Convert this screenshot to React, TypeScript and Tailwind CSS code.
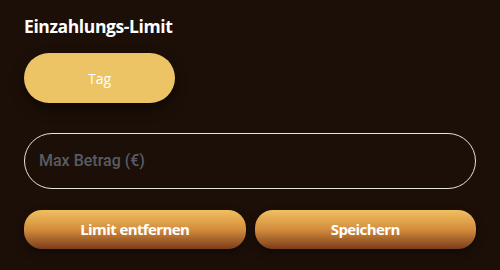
import React from "react";

export default function App() {
  return (
    <div className="w-[500px] h-[270px] bg-[#1c0f08] px-6 pt-[13px] flex flex-col" style={{ fontFamily: "'Open Sans', sans-serif" }}>
      <h2 className="text-[17.5px] leading-[26px] font-bold text-white tracking-[-0.4px]">Einzahlungs-Limit</h2>
      <div className="mt-[14px]">
        <button className="w-[151px] h-[50px] rounded-full bg-[#ecc466] text-white text-[14px] shadow-[0_6px_14px_rgba(0,0,0,0.45)]">Tag</button>
      </div>
      <div className="mt-[30px] h-[56px] rounded-full border border-[#e8e4df] flex items-center px-[14px]">
        <span className="text-[16px] font-medium text-[#575c66]" style={{ fontFamily: "Roboto, sans-serif" }}>Max Betrag (€)</span>
      </div>
      <div className="mt-[21px] flex gap-[9px]">
        <button className="flex-1 h-[39px] rounded-[18px] bg-gradient-to-b from-[#f0c05f] via-[#d48d3d] to-[#7a3d1b] text-white font-bold text-[15px] tracking-[-0.6px] shadow-[0_4px_10px_rgba(0,0,0,0.4)]">Limit entfernen</button>
        <button className="flex-1 h-[39px] rounded-[18px] bg-gradient-to-b from-[#f0c05f] via-[#d48d3d] to-[#7a3d1b] text-white font-bold text-[15px] tracking-[-0.6px] shadow-[0_4px_10px_rgba(0,0,0,0.4)]">Speichern</button>
      </div>
    </div>
  );
}
